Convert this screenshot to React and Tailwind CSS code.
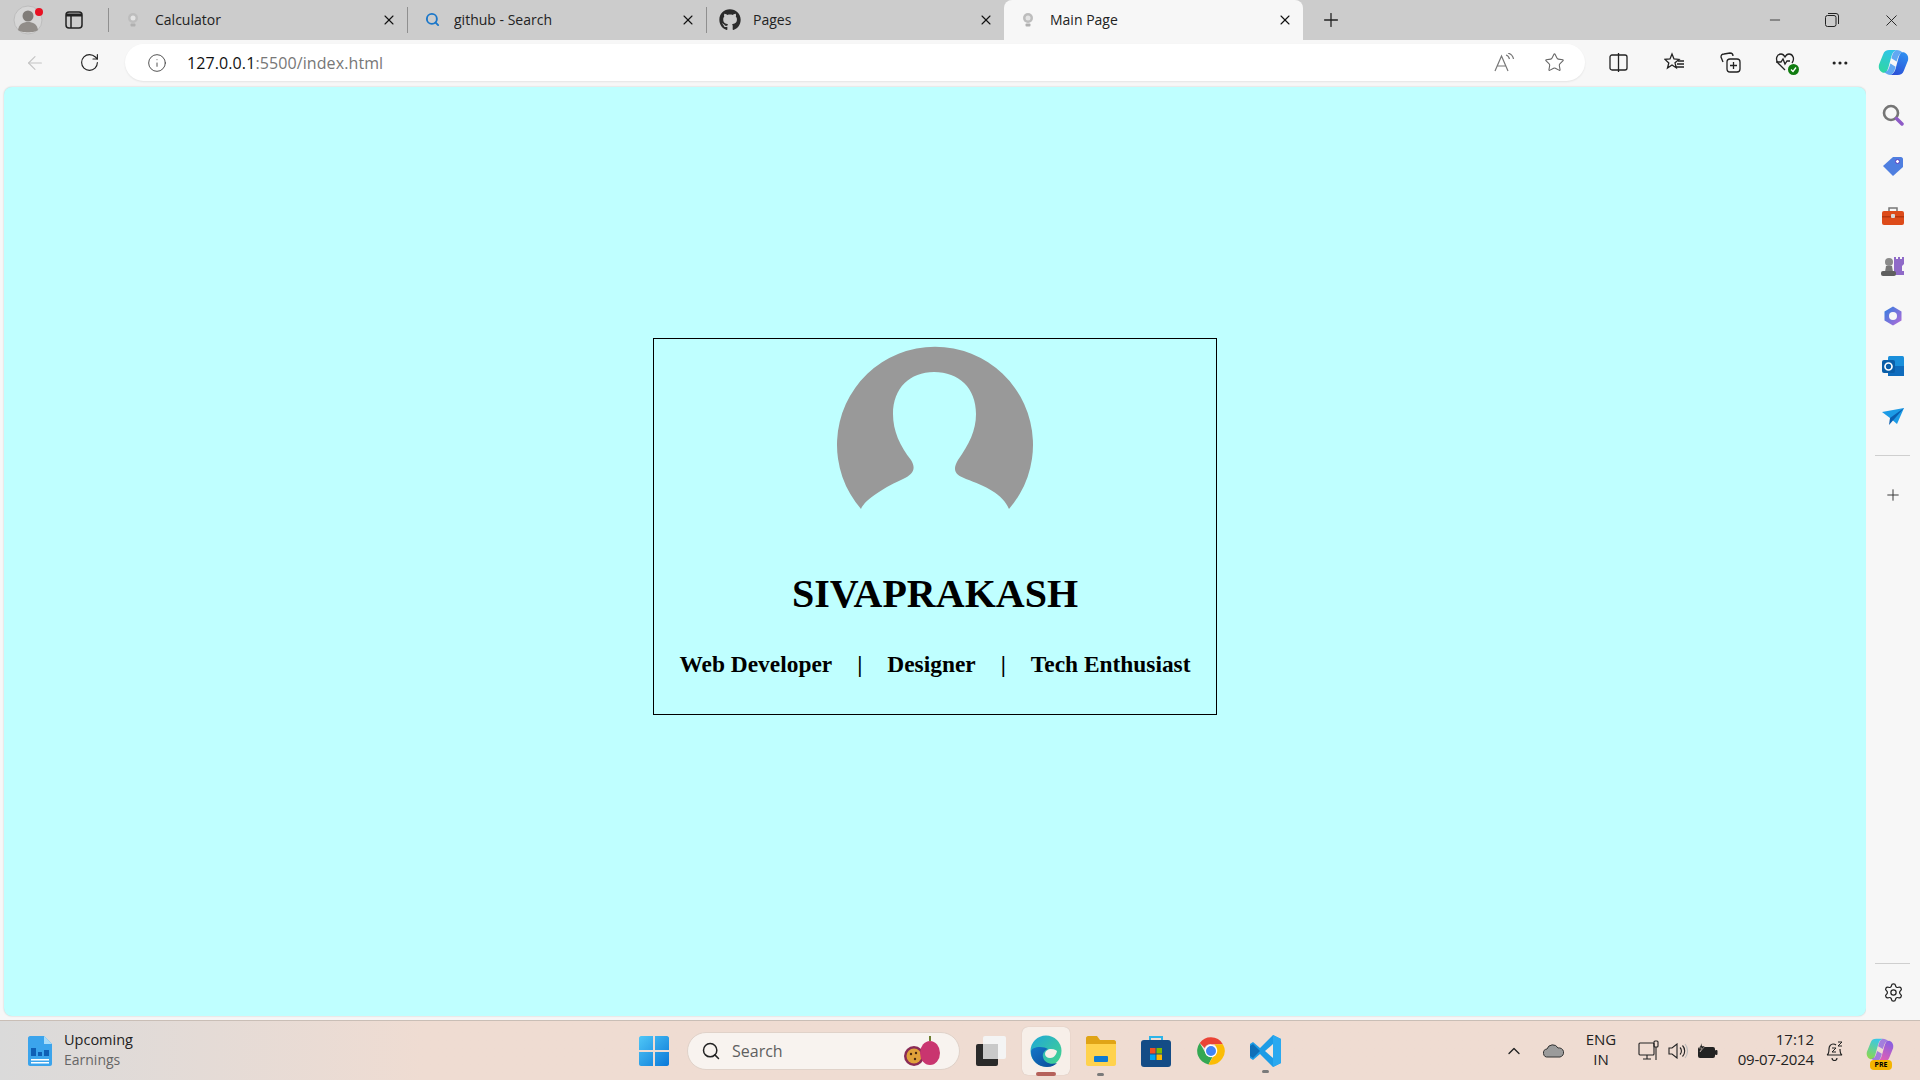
import React from "react";
import { ArrowLeft, RotateCw, Info, X, Plus, Minus, Star, Search, Settings, ChevronUp, MoreHorizontal } from "lucide-react";
import { FaGithub } from "react-icons/fa";

const uiFont = "font-['Open_Sans',sans-serif]";

const Bulb = () => (
  <svg width="12" height="16" viewBox="0 0 12 16">
    <circle cx="6" cy="6" r="5" fill="#bdbdbd" />
    <circle cx="6" cy="6" r="2.5" fill="#e4e4e4" />
    <rect x="3.5" y="11.5" width="5" height="3" rx="1" fill="#b0b0b0" />
  </svg>
);

const Tab = ({ icon, title, active }) => (
  <div className={`flex items-center h-10 w-[299px] shrink-0 ${active ? "bg-[#f7f7f7] rounded-t-lg" : "border-r border-[#8f8f8f] [border-image:linear-gradient(transparent_20%,#8f8f8f_20%,#8f8f8f_80%,transparent_80%)_1]"}`}>
    <div className="w-[46px] flex justify-center pl-[2px] pb-[1px] shrink-0">{icon}</div>
    <span className="text-[14px] text-[#222] flex-1 truncate pb-[2px]">{title}</span>
    <X size={16} strokeWidth={1.6} className="text-[#111] mr-[10px]" />
  </div>
);

const Copilot = ({ size = 30, id, colors }) => (
  <svg width={size} height={size} viewBox="0 0 30 30">
    <defs>
      <linearGradient id={`${id}A`} x1="0.6" y1="0" x2="0.2" y2="1"><stop offset="0" stopColor={colors[0]} /><stop offset="1" stopColor={colors[1]} /></linearGradient>
      <linearGradient id={`${id}B`} x1="0.6" y1="0" x2="0.2" y2="1"><stop offset="0" stopColor={colors[2]} /><stop offset="1" stopColor={colors[3]} /></linearGradient>
    </defs>
    <path d="M19 27h-7c3-1 4-3 5-6l3-11c1-3 2-5 5-5 3 1 5 4 4 8l-4 10c-1 3-3 4-6 4z" fill={`url(#${id}B)`} />
    <path d="M11 3h7c-3 1-4 3-5 6l-3 11c-1 3-2 5-5 5-3-1-5-4-4-8l4-10c1-3 3-4 6-4z" fill={`url(#${id}A)`} />
    <path d="M18 3c2 0 5 1 6 3-3 0-4 2-5 5l-1 3-5-3c1-4 2-7 5-8zM12 27c-2 0-5-1-6-3 3 0 4-2 5-5l1-3 5 3c-1 4-2 7-5 8z" fill={colors[2]} opacity="0.75" />
  </svg>
);

const TabStrip = () => (
  <div className={`flex items-center h-10 bg-[#cccccc] shrink-0 ${uiFont}`}>
    <div className="w-[109px] flex items-center shrink-0 border-r border-[#8f8f8f] h-6 relative">
      <svg width="30" height="30" viewBox="0 0 30 30" className="ml-[13px]">
        <circle cx="15" cy="15" r="14" fill="#d6d6d6" stroke="#bdbdbd" />
        <circle cx="15" cy="11" r="5.5" fill="#807c78" />
        <path d="M5 25c1-6 5-8 10-8s9 2 10 8c-3 3-17 3-20 0z" fill="#918d89" />
      </svg>
      <span className="absolute left-[35px] top-0 w-2 h-2 rounded-full bg-[#e81123]" />
      <svg width="18" height="18" viewBox="0 0 18 18" className="ml-[22px]" fill="none" stroke="#222" strokeWidth="1.5">
        <rect x="1" y="1" width="16" height="16" rx="3" />
        <path d="M6 4v13" />
        <path d="M1 4h16" strokeWidth="3" />
      </svg>
    </div>
    <Tab icon={<Bulb />} title="Calculator" />
    <Tab icon={<Search size={15} strokeWidth={3} className="text-[#1b77c9]" />} title="github - Search" />
    <div className="w-[297px] shrink-0">
      <div className="flex items-center h-10">
        <div className="w-[46px] flex justify-center shrink-0 text-[#2b2b2b]"><FaGithub size={22} /></div>
        <span className="text-[14px] text-[#222] flex-1 pb-[2px]">Pages</span>
        <X size={16} strokeWidth={1.6} className="text-[#111] mr-[10px]" />
      </div>
    </div>
    <Tab icon={<Bulb />} title="Main Page" active />
    <Plus size={22} strokeWidth={1.4} className="ml-[17px] text-[#222]" />
    <div className="flex-1" />
    <Minus size={16} strokeWidth={1.2} className="text-[#222] mr-[42px]" />
    <svg width="14" height="14" viewBox="0 0 14 14" fill="none" stroke="#222" className="mr-[43px]">
      <rect x="0.5" y="2.5" width="10.5" height="11" rx="2" />
      <path d="M3 .5h8a2.5 2.5 0 0 1 2.5 2.5v8" />
    </svg>
    <X size={19} strokeWidth={1.2} className="text-[#222] mr-[19px]" />
  </div>
);

const Toolbar = () => (
  <div className={`flex items-center h-[47px] bg-[#f7f7f7] shrink-0 pb-[2px] ${uiFont}`}>
    <ArrowLeft size={22} strokeWidth={1.2} className="ml-[24px] text-[#c4c4c4]" />
    <RotateCw size={21} strokeWidth={1.3} className="ml-[33px] text-[#222]" />
    <div className="ml-[25px] w-[1460px] h-[37px] bg-white rounded-full flex items-center shadow-[0_1px_2px_rgba(0,0,0,0.08)]">
      <Info size={20} strokeWidth={1.1} className="ml-[22px] text-[#444]" />
      <span className="ml-[20px] text-[16px] tracking-[0.1px] text-[#111]">127.0.0.1<span className="text-[#777]">:5500/index.html</span></span>
      <div className="flex-1" />
      <svg width="21" height="20" viewBox="0 0 21 20" fill="none" stroke="#777" strokeWidth="1.2" className="mr-[29px]">
        <path d="M1 18L7.500 3 14 18M3.500 13h8" />
        <path d="M12 2c2 .5 3 2 3.500 4M14 0c3 1 5 3 5.500 6" />
      </svg>
      <Star size={21} strokeWidth={1.2} className="text-[#666] mr-[20px]" />
    </div>
    <svg width="19" height="19" viewBox="0 0 19 19" fill="none" stroke="#222" strokeWidth="1.3" className="ml-[24px]">
      <rect x="1" y="2" width="17" height="15" rx="2" />
      <path d="M9.5 0v19" />
    </svg>
    <svg width="21" height="21" viewBox="0 0 21 21" fill="none" stroke="#222" strokeWidth="1.3" className="ml-[36px]">
      <path d="M8 2l2 5 5 .4-4 3.4 1.3 5L8 13l-4.5 3 1.3-5L1 7.4 6 7z" />
      <path d="M14 9h6M13 12h7M12 15h8" />
    </svg>
    <svg width="21" height="21" viewBox="0 0 21 21" fill="none" stroke="#222" strokeWidth="1.3" className="ml-[35px]">
      <path d="M3 10L1 5c0-2 1-3 3-3l6-1c2 0 3 1 3 3" />
      <rect x="7" y="7" width="13" height="13" rx="3" />
      <path d="M13.5 10v7M10 13.500h7" />
    </svg>
    <div className="relative ml-[34px] w-[21px] h-[21px]">
      <svg width="21" height="21" viewBox="0 0 21 21" fill="none" stroke="#222" strokeWidth="1.3">
        <path d="M10 18L3 11C0 7 2 2 6 2c2 0 3 1 4 3 1-2 2-3 4-3 4 0 6 5 3 9" />
        <path d="M1 10h5l2-3 2 5 2-3h3" />
      </svg>
      <span className="absolute right-[-3px] bottom-[-2px] w-[11px] h-[11px] rounded-full bg-[#107c10] flex items-center justify-center">
        <svg width="7" height="7" viewBox="0 0 7 7" fill="none" stroke="#fff" strokeWidth="1.3"><path d="M1 3.500l2 2 3-4" /></svg>
      </span>
    </div>
    <MoreHorizontal size={20} strokeWidth={1.8} className="ml-[34px] text-[#222]" />
    <div className="ml-[28px]"><Copilot size={31} id="edgeCp" colors={["#2fc4e8", "#2fd8a0", "#2f8df0", "#2b4fd6"]} /></div>
  </div>
);

const Avatar = () => (
  <svg width="196" height="196" viewBox="0 0 196 196" className="block">
    <path
      d="M24 163A98 98 0 1 1 172 163C166 148 148 140 129 133C118 129 115 124 121 114C132 98 139 85 139 68C139 42 122 26 97 26C73 26 56 42 56 68C56 85 63 100 74 114C79 122 77 128 66 133C50 140 28 153 24 163Z"
      fill="#999999"
    />
  </svg>
);

const Card = () => (
  <div className="w-[564px] h-[377px] border border-black flex flex-col items-center pt-[7px] font-['Liberation_Serif',serif] text-black">
    <Avatar />
    <h1 className="text-[40px] leading-[46px] font-bold mt-[29px]">SIVAPRAKASH</h1>
    <div className="flex items-center text-[23.4px] leading-[28px] font-bold mt-[33px] gap-[25px]">
      <span>Web Developer</span>
      <span>|</span>
      <span>Designer</span>
      <span>|</span>
      <span>Tech Enthusiast</span>
    </div>
  </div>
);

const Sidebar = () => (
  <div className="w-[54px] shrink-0 bg-[#f7f7f7] flex flex-col items-center pt-[17px] pr-[1px]">
    <div className="flex flex-col items-center gap-[28px]">
      <svg width="22" height="22" viewBox="0 0 22 22" fill="none" className="mb-[1px]">
        <circle cx="9" cy="9" r="7" stroke="#757575" strokeWidth="2.6" />
        <path d="M14.500 14.500L20 20" stroke="#8e5bc7" strokeWidth="3.500" strokeLinecap="round" />
      </svg>
      <svg width="22" height="22" viewBox="0 0 22 22">
        <path d="M11 2h8c1 0 2 1 2 2v8L11 21 1 11z" fill="#4f7fe0" />
        <circle cx="15.500" cy="6.500" r="2" fill="#fff" stroke="#5b3fc0" />
      </svg>
      <svg width="22" height="22" viewBox="0 0 22 22">
        <path d="M7 6V3h8v3" fill="none" stroke="#777" strokeWidth="1.500" />
        <rect x="0" y="6" width="22" height="14" rx="2" fill="#dd4b1a" />
        <rect x="0" y="11" width="22" height="1.500" fill="#b5360f" />
        <rect x="9" y="9" width="4" height="4" rx="1" fill="#d8d8d8" />
      </svg>
      <svg width="23" height="22" viewBox="0 0 23 22">
        <path d="M13 2h2v2h2V2h2v2h2V2h2v7l-2 2v5h2v4H13z" fill="#8f6ac8" />
        <circle cx="8" cy="7" r="4" fill="#8a8a8a" />
        <path d="M5 11h6l1 6H4z" fill="#777" />
        <rect x="0" y="16" width="15" height="5" rx="2" fill="#5f5f5f" />
      </svg>
      <svg width="22" height="22" viewBox="0 0 22 22" fill="none">
        <defs><linearGradient id="m3" x1="0" y1="0" x2="1" y2="1"><stop offset="0" stopColor="#2f7fe0" /><stop offset="1" stopColor="#b66ad8" /></linearGradient></defs>
        <path d="M11 1.500L19.500 6.500V15.500L11 20.500 2.500 15.500V6.500Z" fill="url(#m3)" />
        <circle cx="11" cy="11" r="4" fill="#f7f7f7" />
      </svg>
      <svg width="22" height="22" viewBox="0 0 22 22">
        <rect x="6" y="1" width="16" height="20" rx="1.500" fill="#1a8fdb" />
        <path d="M6 11h16v10H6z" fill="#0f6cbd" />
        <rect x="0" y="5" width="13" height="13" rx="2" fill="#0a5ea8" />
        <circle cx="6.500" cy="11.500" r="3.500" fill="none" stroke="#fff" strokeWidth="1.700" />
      </svg>
      <svg width="22" height="22" viewBox="0 0 22 22">
        <path d="M0 7L22 3 15 19 8 13z" fill="#1c9be6" />
        <path d="M8 13L22 3 7 20z" fill="#0b5fb0" />
      </svg>
    </div>
    <div className="w-[35px] border-t border-[#cfcfcf] mt-[28px]" />
    <Plus size={18} strokeWidth={1.3} className="mt-[30px] text-[#333]" />
    <div className="flex-1" />
    <div className="w-[35px] border-t border-[#cfcfcf] mb-[18px]" />
    <Settings size={21} strokeWidth={1.4} className="text-[#222] mb-[17px] ml-[1px]" />
  </div>
);

const Main = () => (
  <div className="flex flex-1 bg-[#f7f7f7] min-h-0">
    <div className="w-1 shrink-0" />
    <div className="flex-1 bg-[#bfffff] rounded-lg mb-1 shadow-[0_0_2px_rgba(0,0,0,0.2)] flex items-center justify-center pb-[51px]">
      <Card />
    </div>
    <Sidebar />
  </div>
);

const Taskbar = () => (
  <div className={`h-[60px] shrink-0 border-t border-[#c9beb6] bg-gradient-to-r from-[#dadada] via-[#efdcd2] via-[22%] to-[#efdcd2] flex items-center relative ${uiFont}`}>
    <svg width="24" height="30" viewBox="0 0 24 30" className="ml-[28px] shrink-0">
      <path d="M0 2c0-1 1-2 2-2h14l8 8v20c0 1-1 2-2 2H2c-1 0-2-1-2-2z" fill="#3ba4ec" />
      <path d="M16 0l8 8h-8z" fill="#a9dcf8" />
      <rect x="3" y="12" width="5" height="8" fill="#0f5fb5" />
      <rect x="10" y="16" width="4" height="4" fill="#0f5fb5" />
      <rect x="16" y="14" width="5" height="6" fill="#0f5fb5" />
      <rect x="3" y="23" width="18" height="1.500" fill="#fff" />
      <rect x="3" y="26" width="18" height="1.500" fill="#fff" />
    </svg>
    <div className="ml-[12px] leading-[20px] pb-[2px]">
      <div className="text-[#222] text-[14.5px]">Upcoming</div>
      <div className="text-[#666] text-[14px]">Earnings</div>
    </div>

    {/* pinned apps */}
    <div className="absolute left-[639px] top-0 h-[60px] flex items-center">
      <svg width="30" height="30" viewBox="0 0 30 30" className="shrink-0">
        <defs><linearGradient id="win" x1="0" y1="0" x2="1" y2="1"><stop offset="0" stopColor="#4fc7f7" /><stop offset="1" stopColor="#0a78d8" /></linearGradient></defs>
        <path d="M2 0h12v14H0V2c0-1 1-2 2-2zM16 0h12c1 0 2 1 2 2v12H16zM0 16h14v14H2c-1 0-2-1-2-2zM16 16h14v12c0 1-1 2-2 2H16z" fill="url(#win)" />
      </svg>
      <div className="ml-[18px] w-[273px] h-[38px] rounded-full bg-[#f8f3ef] border border-[#e0d2c9] flex items-center relative shrink-0">
        <Search size={20} strokeWidth={1.8} className="ml-[13px] text-[#222]" />
        <span className="ml-[11px] text-[16px] text-[#5f5f5f]">Search</span>
        <svg width="40" height="32" viewBox="0 0 40 32" className="absolute left-[215px] top-[2px]">
          <circle cx="11" cy="21" r="10" fill="#8a2b55" />
          <circle cx="11" cy="21" r="7.500" fill="#e0a13a" />
          <circle cx="8" cy="19" r="1.200" fill="#4a2a12" />
          <circle cx="13" cy="18" r="1.200" fill="#4a2a12" />
          <circle cx="12" cy="24" r="1.200" fill="#4a2a12" />
          <ellipse cx="27" cy="18" rx="10" ry="12" fill="#c9356f" />
          <path d="M27 6V1" stroke="#6f7f30" strokeWidth="2" />
        </svg>
      </div>
      <svg width="30" height="30" viewBox="0 0 30 30" className="ml-[16px] shrink-0">
        <rect x="7" y="0" width="23" height="23" rx="2" fill="#f4f4f4" />
        <rect x="0" y="8" width="22" height="22" rx="2" fill="#2a2a2a" />
        <rect x="7" y="8" width="15" height="15" fill="#c9c9c9" />
      </svg>
      <div className="ml-[16px] w-[48px] h-[48px] rounded-md bg-[#f7efe9] shadow-[0_0_1px_rgba(0,0,0,0.2)] flex items-center justify-center relative shrink-0">
        <svg width="32" height="32" viewBox="0 0 32 32">
          <defs>
            <linearGradient id="edgeA" x1="0" y1="0" x2="1" y2="1"><stop offset="0" stopColor="#1fa7d8" /><stop offset="1" stopColor="#46d68a" /></linearGradient>
            <linearGradient id="edgeB" x1="0" y1="0" x2="1" y2="1"><stop offset="0" stopColor="#1477c9" /><stop offset="1" stopColor="#0b4a97" /></linearGradient>
          </defs>
          <circle cx="16" cy="16" r="15.500" fill="url(#edgeA)" />
          <path d="M1 17c0 9 8 15 16 15 5 0 8-2 10-4-6 2-13 0-14-6-1-4 2-7 5-8-4-3-17-3-17 3z" fill="url(#edgeB)" />
          <path d="M15 19c0-3 3-5 6-5 4 0 6 2 6 2s-1 7-7 7c-3 0-5-2-5-4z" fill="#f7efe9" />
        </svg>
        <span className="absolute left-[14px] bottom-[-1px] w-[20px] h-[4px] rounded-full bg-[#b5615a]" />
      </div>
      <div className="ml-[16px] w-[30px] h-[30px] relative shrink-0">
        <svg width="30" height="30" viewBox="0 0 30 30">
          <path d="M0 2c0-1 1-2 2-2h9l3 4h14c1 0 2 1 2 2v4H0z" fill="#e0a416" />
          <path d="M0 8h30v20c0 1-1 2-2 2H2c-1 0-2-1-2-2z" fill="#ffd24d" />
          <rect x="8" y="20" width="14" height="6" rx="1" fill="#0f7ad1" />
        </svg>
        <span className="absolute left-[11px] top-[37px] w-[7px] h-[3px] rounded-full bg-[#7a7a7a]" />
      </div>
      <svg width="30" height="32" viewBox="0 0 30 32" className="ml-[25px] shrink-0">
        <path d="M9 6V2h12v4" fill="none" stroke="#2db4e8" strokeWidth="2" />
        <rect x="0" y="5" width="30" height="27" rx="3" fill="#144c86" />
        <rect x="9" y="13" width="5.500" height="5.500" fill="#f25022" />
        <rect x="15.500" y="13" width="5.500" height="5.500" fill="#7fba00" />
        <rect x="9" y="19.500" width="5.500" height="5.500" fill="#00a4ef" />
        <rect x="15.500" y="19.500" width="5.500" height="5.500" fill="#ffb900" />
      </svg>
      <svg width="30" height="30" viewBox="0 0 48 48" className="ml-[25px] shrink-0">
        <path d="M24 2a22 22 0 0 1 19 11H24a11 11 0 0 0-10 6L6 11A22 22 0 0 1 24 2z" fill="#ea4335" />
        <path d="M6 11l9.500 16.500a11 11 0 0 0 11 5.500L20 45.500A22 22 0 0 1 6 11z" fill="#34a853" />
        <path d="M43 13a22 22 0 0 1-23 32.500l9.500-16.500a11 11 0 0 0 0-16z" fill="#fbbc05" />
        <circle cx="24" cy="24" r="9" fill="#4285f4" stroke="#fff" strokeWidth="2" />
      </svg>
      <div className="ml-[24px] w-[31px] h-[32px] relative shrink-0">
        <svg width="31" height="32" viewBox="0 0 31 32">
          <path d="M23 0l8 4v24l-8 4-13-13-7 6-3-2v-14l3-2 7 6z" fill="#1d9ce6" />
          <path d="M23 9l-8 7 8 7z" fill="#f7e6dc" />
          <path d="M3 9l7 7-7 7-3-2v-10z" fill="#0f6fb8" />
          <path d="M23 0l8 4v24l-8 4z" fill="#2aa9f0" />
        </svg>
        <span className="absolute left-[12px] top-[35px] w-[7px] h-[3px] rounded-full bg-[#7a7a7a]" />
      </div>
    </div>

    {/* system tray */}
    <div className="ml-auto flex items-center h-full text-[#222]">
      <ChevronUp size={20} strokeWidth={1.6} />
      <svg width="21" height="14" viewBox="0 0 21 14" className="ml-[19px]">
        <path d="M5 13a4 4 0 0 1-1-8 6 6 0 0 1 11-1 4.500 4.500 0 0 1 2 9z" fill="#9b9b9b" stroke="#333" />
      </svg>
      <div className="ml-[19px] text-[15px] leading-[20px] text-center w-[36px] pb-[3px]"><div>ENG</div><div>IN</div></div>
      <svg width="22" height="22" viewBox="0 0 22 22" fill="none" stroke="#222" strokeWidth="1.100" className="ml-[19px]">
        <rect x="1" y="3" width="15" height="12" rx="1" />
        <path d="M5 19h8M9 15v4" />
        <rect x="16" y="1" width="4" height="6" rx="1" />
        <path d="M18 7v13" />
      </svg>
      <svg width="20" height="16" viewBox="0 0 20 16" fill="none" stroke="#222" strokeWidth="1.100" className="ml-[8px]">
        <path d="M1 5h3l5-4v14l-5-4H1z" />
        <path d="M12 4.500a5 5 0 0 1 0 7M14.500 2.500a8 8 0 0 1 0 11" />
        <path d="M17 1a11 11 0 0 1 0 14" stroke="#bbb" />
      </svg>
      <svg width="21" height="16" viewBox="0 0 21 16" className="ml-[9px]">
        <rect x="1" y="4" width="17" height="11" rx="2" fill="#222" />
        <rect x="18" y="7" width="2.500" height="5" rx="1" fill="#222" />
        <path d="M5 0L2 5h3L3 9l5-6H5z" fill="#222" stroke="#efdcd2" strokeWidth="0.500" />
      </svg>
      <div className="ml-[19px] w-[77px] text-[15px] leading-[20px] text-right whitespace-nowrap pb-[3px]">
        <div>17:12</div>
        <div className="tracking-[-0.2px]">09-07-2024</div>
      </div>
      <svg width="17" height="20" viewBox="0 0 17 20" fill="none" stroke="#222" strokeWidth="1.200" className="ml-[12px]">
        <path d="M1 14c2-1 2-3 2-6 0-3 2-5 4-5 1 0 2 0 3 1M14 8c0 3 0 5 2 6H1M6 17a2.500 2.500 0 0 0 5 0" />
        <path d="M6 7h4l-4 4h4M12 1h4l-4 4h4" strokeWidth="1" />
      </svg>
      <div className="ml-[23px] mr-[26px] w-[28px] h-[30px] relative">
        <Copilot size={28} id="trayCp" colors={["#38c8e8", "#8fd84a", "#8a5fe0", "#e85fb0"]} />
        <span className="absolute left-[4px] bottom-[-4px] w-[22px] h-[10px] rounded-sm bg-[#f4b400] text-[7px] leading-[10px] font-bold text-center text-black">PRE</span>
      </div>
    </div>
  </div>
);

export default function App() {
  return (
    <div className="w-[1920px] h-[1080px] flex flex-col overflow-hidden">
      <TabStrip />
      <Toolbar />
      <Main />
      <Taskbar />
    </div>
  );
}
